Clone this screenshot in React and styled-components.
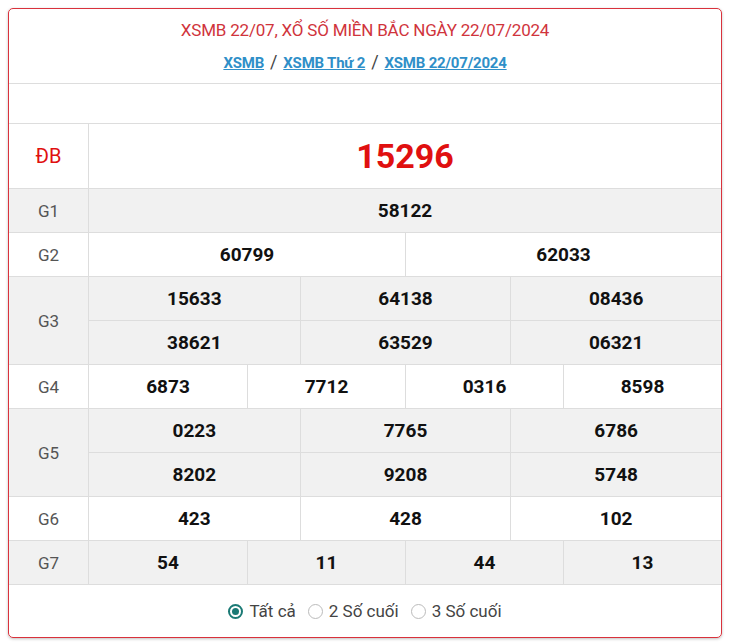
import React from "react";
import styled, { createGlobalStyle } from "styled-components";

const Global = createGlobalStyle`
  body { margin: 0; background: #fff; font-family: Roboto, "Liberation Sans", sans-serif; }
`;
const Card = styled.div`
  margin: 8px 8px 6px 8px; width: 714px; box-sizing: border-box;
  border: 1.5px solid #d9323c; border-radius: 5px; overflow: hidden;
  box-shadow: 0 1px 3px rgba(0,0,0,.25);
`;
const Head = styled.div`
  text-align: center; padding: 10px 0 10px; border-bottom: 1px solid #ddd;
`;
const Title = styled.div`
  color: #d0343c; font-size: 17px; letter-spacing: -0.2px; line-height: 22px;
`;
const Crumbs = styled.div`
  margin-top: 11px; font-size: 15px; font-weight: 700; color: #444; line-height: 20px;
  letter-spacing: -0.2px;
  a { color: #2f8fc8; text-decoration: underline; }
  span { font-weight: 400; font-size: 18px; margin: 0 6px; }
`;
const Empty = styled.div` height: 39px; border-bottom: 1px solid #ddd; `;
const Row = styled.div`
  display: grid; grid-template-columns: 80px 1fr; border-bottom: 1px solid #ddd;
  background: ${p => (p.$grey ? "#f1f1f1" : "#fff")};
`;
const Label = styled.div`
  display: flex; align-items: center; justify-content: center;
  border-right: 1px solid #ddd; font-size: ${p => (p.$big ? 20 : 17)}px;
  color: ${p => (p.$red ? "#e01010" : "#555")};
`;
const Values = styled.div`
  display: grid; grid-template-columns: repeat(${p => p.$cols}, 1fr);
`;
const Num = styled.div`
  height: ${p => p.$h || 43}px; display: flex; align-items: center; justify-content: center;
  font-weight: 700; font-size: ${p => (p.$big ? 34 : 19)}px;
  color: ${p => (p.$big ? "#e01010" : "#111")};
  border-left: ${p => (p.$first ? "none" : "1px solid #ddd")};
  border-top: ${p => (p.$top ? "1px solid #ddd" : "none")};
`;
const Radios = styled.div`
  display: flex; justify-content: center; align-items: center; gap: 12px;
  height: 52px; font-size: 17px; color: #444;
`;
const Opt = styled.label` display: flex; align-items: center; gap: 6px; `;
const Dot = styled.span`
  width: 15px; height: 15px; border-radius: 50%; box-sizing: border-box;
  border: ${p => (p.$on ? "2px solid #1b7a75" : "1px solid #bbb")};
  display: flex; align-items: center; justify-content: center;
  &::after { content: ""; width: 7px; height: 7px; border-radius: 50%;
    background: ${p => (p.$on ? "#1b7a75" : "transparent")}; }
`;

const prizes = [
  { l: "G1", cols: 1, v: ["58122"], grey: true },
  { l: "G2", cols: 2, v: ["60799", "62033"] },
  { l: "G3", cols: 3, v: ["15633", "64138", "08436", "38621", "63529", "06321"], grey: true },
  { l: "G4", cols: 4, v: ["6873", "7712", "0316", "8598"] },
  { l: "G5", cols: 3, v: ["0223", "7765", "6786", "8202", "9208", "5748"], grey: true },
  { l: "G6", cols: 3, v: ["423", "428", "102"] },
  { l: "G7", cols: 4, v: ["54", "11", "44", "13"], grey: true },
];

export default function App() {
  return (
    <>
      <Global />
      <Card>
        <Head>
          <Title>XSMB 22/07, XỔ SỐ MIỀN BẮC NGÀY 22/07/2024</Title>
          <Crumbs>
            <a>XSMB</a><span>/</span><a>XSMB Thứ 2</a><span>/</span><a>XSMB 22/07/2024</a>
          </Crumbs>
        </Head>
        <Empty />
        <Row>
          <Label $red $big>ĐB</Label>
          <Values $cols={1}><Num $big $first $h={64}>15296</Num></Values>
        </Row>
        {prizes.map(p => (
          <Row key={p.l} $grey={p.grey}>
            <Label>{p.l}</Label>
            <Values $cols={p.cols}>
              {p.v.map((n, i) => (
                <Num key={i} $first={i % p.cols === 0} $top={i >= p.cols}>{n}</Num>
              ))}
            </Values>
          </Row>
        ))}
        <Radios>
          <Opt><Dot $on />Tất cả</Opt>
          <Opt><Dot />2 Số cuối</Opt>
          <Opt><Dot />3 Số cuối</Opt>
        </Radios>
      </Card>
    </>
  );
}
